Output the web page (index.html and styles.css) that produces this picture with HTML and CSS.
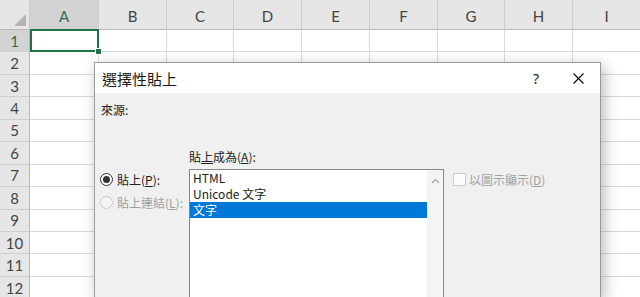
FILE: index.html
```html
<!DOCTYPE html>
<html lang="zh-Hant">
<head>
<meta charset="utf-8">
<title>選擇性貼上</title>
<link rel="stylesheet" href="styles.css">
</head>
<body>
<div class="sheet">
  <div class="corner"><span class="tri"></span></div>
  <div class="ch sel">A</div><div class="ch">B</div><div class="ch">C</div><div class="ch">D</div><div class="ch">E</div><div class="ch">F</div><div class="ch">G</div><div class="ch">H</div><div class="ch">I</div>

  <div class="rh sel">1</div><div class="cell active"></div><div class="cell"></div><div class="cell"></div><div class="cell"></div><div class="cell"></div><div class="cell"></div><div class="cell"></div><div class="cell"></div><div class="cell"></div>
  <div class="rh">2</div><div class="cell"></div><div class="cell"></div><div class="cell"></div><div class="cell"></div><div class="cell"></div><div class="cell"></div><div class="cell"></div><div class="cell"></div><div class="cell"></div>
  <div class="rh">3</div><div class="cell"></div><div class="cell"></div><div class="cell"></div><div class="cell"></div><div class="cell"></div><div class="cell"></div><div class="cell"></div><div class="cell"></div><div class="cell"></div>
  <div class="rh">4</div><div class="cell"></div><div class="cell"></div><div class="cell"></div><div class="cell"></div><div class="cell"></div><div class="cell"></div><div class="cell"></div><div class="cell"></div><div class="cell"></div>
  <div class="rh">5</div><div class="cell"></div><div class="cell"></div><div class="cell"></div><div class="cell"></div><div class="cell"></div><div class="cell"></div><div class="cell"></div><div class="cell"></div><div class="cell"></div>
  <div class="rh">6</div><div class="cell"></div><div class="cell"></div><div class="cell"></div><div class="cell"></div><div class="cell"></div><div class="cell"></div><div class="cell"></div><div class="cell"></div><div class="cell"></div>
  <div class="rh">7</div><div class="cell"></div><div class="cell"></div><div class="cell"></div><div class="cell"></div><div class="cell"></div><div class="cell"></div><div class="cell"></div><div class="cell"></div><div class="cell"></div>
  <div class="rh">8</div><div class="cell"></div><div class="cell"></div><div class="cell"></div><div class="cell"></div><div class="cell"></div><div class="cell"></div><div class="cell"></div><div class="cell"></div><div class="cell"></div>
  <div class="rh">9</div><div class="cell"></div><div class="cell"></div><div class="cell"></div><div class="cell"></div><div class="cell"></div><div class="cell"></div><div class="cell"></div><div class="cell"></div><div class="cell"></div>
  <div class="rh">10</div><div class="cell"></div><div class="cell"></div><div class="cell"></div><div class="cell"></div><div class="cell"></div><div class="cell"></div><div class="cell"></div><div class="cell"></div><div class="cell"></div>
  <div class="rh">11</div><div class="cell"></div><div class="cell"></div><div class="cell"></div><div class="cell"></div><div class="cell"></div><div class="cell"></div><div class="cell"></div><div class="cell"></div><div class="cell"></div>
  <div class="rh">12</div><div class="cell"></div><div class="cell"></div><div class="cell"></div><div class="cell"></div><div class="cell"></div><div class="cell"></div><div class="cell"></div><div class="cell"></div><div class="cell"></div>
</div>

<div class="dialog">
  <div class="titlebar">
    <div class="title">選擇性貼上</div>
    <div class="tbtn help">?</div>
    <div class="tbtn close">
      <svg width="11" height="11" viewBox="0 0 11 11"><path d="M0.5 0.5 L10.5 10.5 M10.5 0.5 L0.5 10.5" stroke="#000" stroke-width="1.1" fill="none"/></svg>
    </div>
  </div>
  <div class="body">
    <div class="source">來源:</div>
    <div class="main">
      <div class="aslabel">貼<u>上</u>成為(<u>A</u>):</div>
      <div class="radios">
        <div class="radio-row"><span class="radio on"></span><span>貼上(<u>P</u>):</span></div>
        <div class="radio-row disabled"><span class="radio"></span><span>貼上連結(<u>L</u>):</span></div>
      </div>
      <div class="listbox">
        <div class="items">
          <div class="item">HTML</div>
          <div class="item">Unicode 文字</div>
          <div class="item selected">文字</div>
        </div>
        <div class="scroll">
          <svg width="9" height="6" viewBox="0 0 9 6"><path d="M1 5 L4.5 1.5 L8 5" stroke="#a6a6a6" stroke-width="1.2" fill="none"/></svg>
        </div>
      </div>
      <div class="check-row disabled"><span class="checkbox"></span><span>以圖示顯示(<u>D</u>)</span></div>
    </div>
  </div>
</div>
</body>
</html>
```

FILE: styles.css
```css
html, body {
  margin: 0;
  padding: 0;
  width: 640px;
  height: 297px;
  overflow: hidden;
  background: #fff;
}

.sheet {
  display: grid;
  grid-template-columns: 30px 69px 68px 67px 68px 68px 68px 67px 68px 68px;
  grid-template-rows: 30px repeat(12, 22.45px);
  font-family: Lato, "Liberation Sans", sans-serif;
  color: #444;
}

.corner {
  background: #e6e6e6;
  border-right: 1px solid #c8c8c8;
  border-bottom: 1px solid #b8b8b8;
  box-sizing: border-box;
  position: relative;
}
.corner .tri {
  position: absolute;
  right: 3px;
  bottom: 3px;
  width: 0;
  height: 0;
  border-left: 12px solid transparent;
  border-bottom: 12px solid #b4b4b4;
}

.ch {
  background: #e6e6e6;
  border-right: 1px solid #cfcfcf;
  border-bottom: 1px solid #b8b8b8;
  box-sizing: border-box;
  display: flex;
  align-items: center;
  justify-content: center;
  font-size: 15px;
  padding-top: 2px;
}
.ch.sel, .rh.sel {
  background: #d3d3d3;
  color: #2f6e47;
}

.rh {
  background: #e6e6e6;
  border-right: 1px solid #b8b8b8;
  border-bottom: 1px solid #cfcfcf;
  box-sizing: border-box;
  display: flex;
  align-items: center;
  justify-content: center;
  font-size: 15px;
}

.cell {
  border-right: 1px solid #dadada;
  border-bottom: 1px solid #dadada;
  box-sizing: border-box;
  position: relative;
}
.cell.active::after {
  content: "";
  position: absolute;
  left: 0;
  top: -1px;
  right: -1px;
  bottom: -1px;
  border: 2px solid #217346;
}
.cell.active::before {
  content: "";
  position: absolute;
  right: -4px;
  bottom: -4px;
  width: 5px;
  height: 5px;
  background: #217346;
  border: 1px solid #fff;
  z-index: 2;
}

.dialog {
  position: absolute;
  left: 94px;
  top: 62px;
  width: 507px;
  height: 235px;
  overflow: hidden;
  box-sizing: border-box;
  border: 1px solid #9a9a9a;
  border-bottom: 0;
  background: #f0f0f0;
  box-shadow: 3px 4px 14px rgba(0, 0, 0, 0.28);
  font-family: "Noto Sans CJK TC", "Noto Sans", sans-serif;
  font-size: 12px;
  color: #222;
}

.titlebar {
  height: 30px;
  background: #fff;
  display: flex;
  align-items: center;
}
.title {
  flex: 1;
  padding-left: 7px;
  font-size: 15px;
  color: #1a1a1a;
}
.tbtn {
  height: 30px;
  display: flex;
  align-items: center;
  justify-content: center;
}
.help {
  width: 42px;
  font-family: "Noto Sans", sans-serif;
  font-size: 14px;
}
.close {
  width: 43px;
}

.body {
  padding: 9px 6px 0 6px;
}
.source {
  line-height: 16px;
}

.main {
  display: grid;
  grid-template-columns: 88px 255px auto;
  grid-template-rows: 20px auto;
  margin-top: 31px;
}
.aslabel {
  grid-column: 2;
  grid-row: 1;
  line-height: 16px;
}
.radios {
  grid-column: 1;
  grid-row: 2;
  display: flex;
  flex-direction: column;
  gap: 2px;
}
.radio-row {
  height: 21px;
  display: flex;
  align-items: center;
  gap: 4px;
  margin-left: -1px;
}
.radio {
  width: 13px;
  height: 13px;
  box-sizing: border-box;
  border: 1px solid #333;
  border-radius: 50%;
  background: #fff;
  display: flex;
  align-items: center;
  justify-content: center;
}
.radio.on::after {
  content: "";
  width: 7px;
  height: 7px;
  border-radius: 50%;
  background: #333;
}
.disabled {
  color: #a0a0a0;
}
.disabled .radio {
  border-color: #cccccc;
  background: #f5f5f5;
}

.listbox {
  grid-column: 2;
  grid-row: 2;
  height: 140px;
  box-sizing: border-box;
  border: 1px solid #828790;
  background: #fff;
  display: flex;
}
.items {
  flex: 1;
}
.item {
  height: 16px;
  line-height: 16px;
  padding-left: 3px;
  white-space: nowrap;
}
.item.selected {
  background: #0078d7;
  color: #fff;
}
.scroll {
  width: 16px;
  background: #f4f4f4;
  display: flex;
  justify-content: center;
  align-items: flex-start;
  padding-top: 8px;
  box-sizing: border-box;
}

.check-row {
  grid-column: 3;
  grid-row: 2;
  height: 21px;
  display: flex;
  align-items: center;
  gap: 3px;
  padding-left: 9px;
}
.checkbox {
  width: 13px;
  height: 13px;
  box-sizing: border-box;
  border: 1px solid #cccccc;
  background: #fcfcfc;
}
u {
  text-decoration: underline;
  text-underline-offset: 1px;
}
```
